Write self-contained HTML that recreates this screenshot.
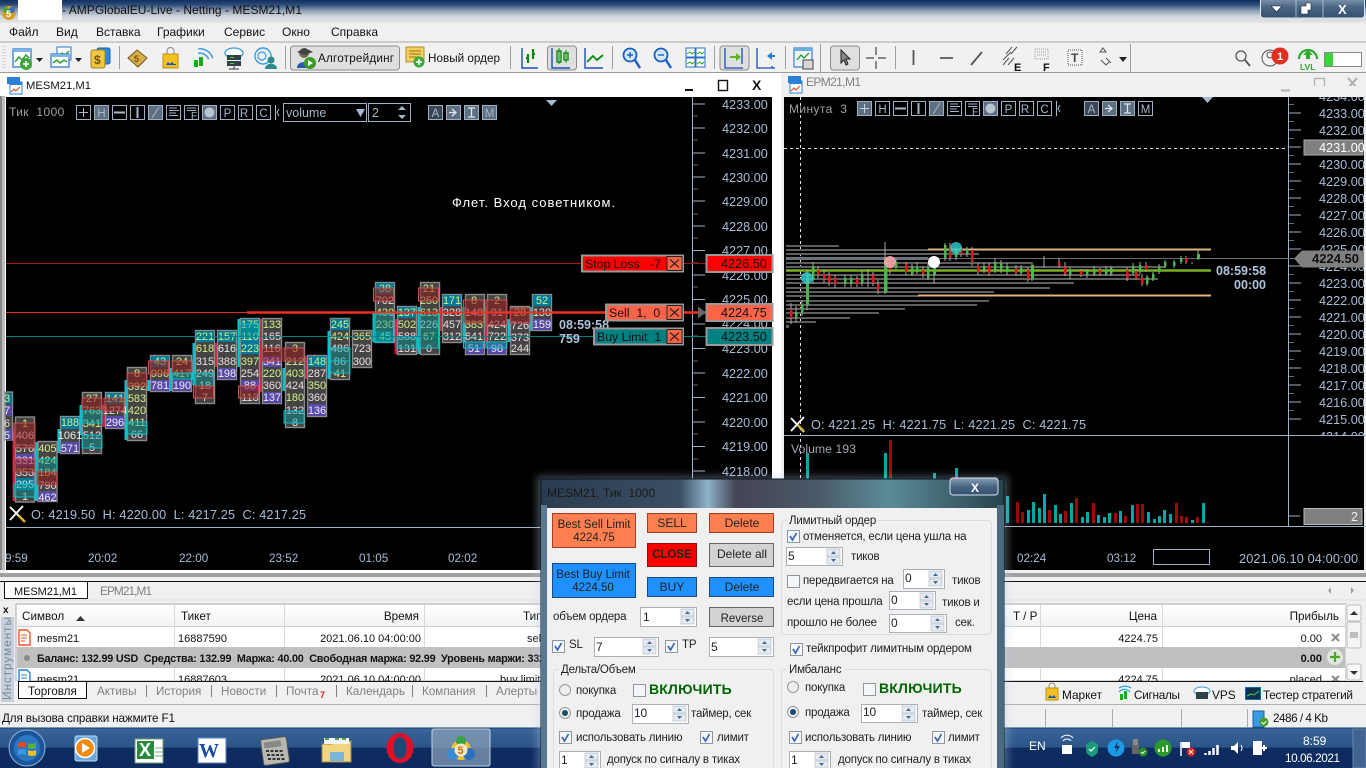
<!DOCTYPE html>
<html><head><meta charset="utf-8"><title>MT5</title>
<style>
html,body{margin:0;padding:0;width:1366px;height:768px;overflow:hidden;background:#f0f0f0}
svg{position:absolute;left:0;top:0;display:block}
text{font-family:"Liberation Sans","Noto Sans CJK JP",sans-serif;font-size:12px;white-space:pre;fill:#111}
.ax text,text.ax{font-size:12.7px;fill:#a8bcd6}
.fp text{font-size:11px;text-anchor:middle}
.g{fill:#d4f088!important}.p{fill:#f0dede!important}.w{fill:#e8f0f0!important}
.cs{fill:#444;stroke:#8a8a8a;stroke-width:1.4}
.tl{fill:#007a9a}.pu{fill:#5a48a8}
.rb{fill:rgba(150,25,25,.55);stroke:#c85050;stroke-width:1}
.tb{fill:rgba(0,150,150,.45);stroke:#00c4cc;stroke-width:1}
.cy{fill:#00c4d4}.cr{fill:#dc143c}
.bt rect{fill:none;stroke:#9fb0c4;stroke-width:1}
.bt text{fill:#a8b8cc;font-size:11.5px;text-anchor:middle}
.bt .on{fill:#5f6f82}
.d text{font-size:11.5px;fill:#222;letter-spacing:-.2px}
.d .c{text-anchor:middle;letter-spacing:0}
.sp{fill:#fff;stroke:#aab0b8}
.ar{fill:#e4eaf2;stroke:#b0b8c0;stroke-width:.6}
.ck{fill:#f4f6f8;stroke:#8e979f}
.tk{fill:none;stroke:#3a66b0;stroke-width:1.7}
.gr{fill:none;stroke:#dcdcdc}
.on2{fill:#dfdfdf;stroke:#8c8c8c;stroke-width:1}
.sep{stroke:#a0a0a0;stroke-width:1}
.tbl text{font-size:11px;fill:#111}
.tbl text.h{font-size:11.7px}
.rt{text-anchor:end}
.gt{fill:#808080!important}
.vb rect{width:3px}
</style></head><body>
<svg width="1366" height="768" viewBox="0 0 1366 768" xmlns="http://www.w3.org/2000/svg">
<defs>
<linearGradient id="tt" x1="0" y1="0" x2="0" y2="1"><stop offset="0" stop-color="#12305f"/><stop offset=".2" stop-color="#2a4a78"/><stop offset=".45" stop-color="#8c9cb0"/><stop offset=".7" stop-color="#cfd4da"/><stop offset="1" stop-color="#e6e6e6"/></linearGradient>
<linearGradient id="tbg" x1="0" y1="0" x2="0" y2="1"><stop offset="0" stop-color="#3a659a"/><stop offset=".48" stop-color="#2b5488"/><stop offset=".5" stop-color="#0f2c60"/><stop offset="1" stop-color="#0c2a5e"/></linearGradient>
<linearGradient id="gl" x1="0" y1="0" x2="1" y2="0"><stop offset="0" stop-color="#2a3c50"/><stop offset=".3" stop-color="#3b4e62"/><stop offset=".36" stop-color="#8fb4cc"/><stop offset=".42" stop-color="#445"/><stop offset=".6" stop-color="#4a5a6a"/><stop offset=".75" stop-color="#5c8c98"/><stop offset="1" stop-color="#28424e"/></linearGradient>
<linearGradient id="hd" x1="0" y1="0" x2="0" y2="1"><stop offset="0" stop-color="#fff"/><stop offset="1" stop-color="#f0f2f4"/></linearGradient>
<linearGradient id="wb" x1="0" y1="0" x2="0" y2="1"><stop offset="0" stop-color="#8aa0b8"/><stop offset=".5" stop-color="#4a6484"/><stop offset="1" stop-color="#33506e"/></linearGradient>
<filter id="bl" x="-5%" y="-5%" width="110%" height="110%"><feGaussianBlur stdDeviation="4"/></filter>
</defs>

<!-- title bar -->
<rect width="1366" height="23" fill="url(#tt)"/>
<rect x="18" y="0" width="44" height="20" fill="#fff"/>
<circle cx="9" cy="13" r="7" fill="#d8a020"/><circle cx="6" cy="10" r="3" fill="#48a048"/><circle cx="12" cy="10" r="3" fill="#3070c0"/><text x="6" y="17" style="font-size:9px;fill:#fff;font-weight:bold">5</text>
<text x="62" y="14" style="font-size:12px;fill:#101010" textLength="240">- AMPGlobalEU-Live - Netting - MESM21,M1</text>
<rect x="1260.5" y="-3" width="104" height="21" rx="3" fill="url(#wb)" stroke="#dfe6ee"/>
<path d="M1296 0v17M1323 0v17" stroke="#cfd8e2" stroke-width=".7"/>
<path d="M1271 6h11l-5.500 6z" fill="#fff" stroke="#223" stroke-width=".6"/>
<path d="M1301 6h5v-3h5v7h-3v4h-7z" fill="#fff" stroke="#223" stroke-width=".6"/>
<text x="1338" y="14" style="font-size:13px;font-weight:bold;fill:#fff">X</text>

<!-- menu -->
<rect y="23" width="1366" height="19" fill="#f0f0f0"/>
<g>
<text x="9" y="36">Файл</text><text x="56" y="36">Вид</text><text x="96" y="36">Вставка</text><text x="157" y="36">Графики</text><text x="224" y="36">Сервис</text><text x="282" y="36">Окно</text><text x="331" y="36">Справка</text>
</g>

<!-- toolbar -->
<rect y="42" width="1366" height="31" fill="#f1f1f1"/>
<path d="M0 42h1366" stroke="#a8a8a8"/><path d="M0 72.500h1366" stroke="#9a9a9a"/>
<path d="M3 46v22M5 46v22" stroke="#bbb" stroke-dasharray="1 2"/>
<path d="M119.500 46v23M285.500 46v23M510.500 46v23M612.500 46v23M714.500 46v23M785.500 46v23M895.500 46v23M1130.500 44v28M820.500 44v28" class="sep"/>
<!-- new chart -->
<rect x="13" y="49" width="18" height="18" fill="#fff" stroke="#2a70c8" stroke-width="1.2"/><rect x="13" y="49" width="18" height="3" fill="#7ab4e8"/><path d="M15 62l4-5 3 3 4-5 3 3" fill="none" stroke="#30a030" stroke-width="1.5"/>
<circle cx="26" cy="64" r="6" fill="#3ca83c"/><path d="M23 64h6M26 61v6" stroke="#fff" stroke-width="1.6"/>
<path d="M36 58h7l-3.500 4z" fill="#222"/>
<rect x="57" y="47" width="14" height="13" fill="#fff" stroke="#2a70c8"/><path d="M59 56l3-3 3 2 4-4" stroke="#30a030" fill="none" stroke-width="1.3"/>
<rect x="51" y="54" width="18" height="13" fill="#fff" stroke="#2a70c8" stroke-width="1.2"/><rect x="51" y="54" width="18" height="3" fill="#7ab4e8"/><path d="M53 63l4-3 3 3 4-3 3 2" fill="none" stroke="#30a030" stroke-width="1.5"/>
<path d="M75 58h7l-3.500 4z" fill="#222"/>
<rect x="97" y="48" width="13" height="16" rx="2" fill="#2e8ae0" stroke="#1a5aa0"/><rect x="91" y="50" width="14" height="18" rx="2" fill="#f0c840" stroke="#a08020"/><text x="94" y="64" style="font-size:12px;font-weight:bold;fill:#705010">$</text>
<!-- book -->
<path d="M128 58l9-8 10 8-9 9z" fill="#d8b048" stroke="#705a20"/><text x="134" y="62" style="font-size:9px;font-weight:bold;fill:#805010">5</text>
<!-- market bag -->
<rect x="163" y="54" width="15" height="14" fill="#f4c020" stroke="#c09010"/><path d="M167 54v-3a3 3 0 0 1 7 0v3" fill="none" stroke="#888"/><path d="M166 65l2-3 2 2 2-2 2 2 2-0v1z" fill="#1a50c0"/>
<!-- signals -->
<rect x="194" y="60" width="4" height="7" fill="#10b010"/><rect x="199" y="57" width="4" height="9" fill="#10b010"/><path d="M198 56a9 9 0 0 1 12 0M196 52a13 13 0 0 1 17 1" stroke="#3a9ae0" fill="none" stroke-width="1.5" transform="rotate(30 203 55)"/>
<!-- VPS -->
<ellipse cx="234" cy="53" rx="9" ry="5" fill="#fff" stroke="#3a9ae0" stroke-width="1.3"/><rect x="227" y="55" width="14" height="5" fill="#2f4248"/><rect x="227" y="61" width="14" height="5" fill="#2f4248"/><path d="M234 66v3M229 69h10" stroke="#333"/><path d="M230 57.500h4M230 63.500h4" stroke="#40e040"/>
<!-- community -->
<circle cx="263" cy="56" r="8" fill="none" stroke="#3a9ae0" stroke-width="1.4"/><circle cx="262" cy="56" r="4" fill="none" stroke="#3a9ae0" stroke-width="1.2"/><circle cx="271" cy="60" r="3.500" fill="#2a8a8a"/><path d="M265 69c0-7 12-7 12 0z" fill="#2a8a8a"/>
<!-- algo -->
<rect x="290.500" y="46" width="109" height="24" rx="3" class="on2"/>
<circle cx="304" cy="53" r="5" fill="#6a6a50"/><path d="M297 52l8-4 8 4-8 3z" fill="#444"/><path d="M297 68c0-8 14-8 14 0z" fill="#2a5ab0"/><circle cx="310" cy="63" r="6" fill="#3a9a2a"/><path d="M308 60l5 3-5 3z" fill="#fff"/>
<text x="318" y="62" style="font-size:11.7px;fill:#111" textLength="76">Алготрейдинг</text>
<!-- new order -->
<rect x="406" y="47" width="18" height="15" fill="#f0d060" stroke="#b09020"/><path d="M409 51h12M409 54h12M409 57h12" stroke="#a07810"/><circle cx="419" cy="62" r="5.500" fill="#3ca83c"/><path d="M416 62h6M419 59v6" stroke="#fff" stroke-width="1.5"/>
<text x="428" y="62" style="font-size:11.7px;fill:#111" textLength="72">Новый ордер</text>
<!-- chart type icons -->
<g fill="none" stroke-width="1.4">
<path d="M522 48v20h16" stroke="#1a50b8"/><path d="M528 54v9M528 58h-2M533 49v10M533 54h2" stroke="#0a8a0a" stroke-width="2.200"/>
<rect x="547.500" y="46" width="29" height="24" rx="3" class="on2" style="stroke-width:1"/>
<path d="M552 48v20h18" stroke="#1a50b8"/><rect x="557" y="51" width="4" height="11" stroke="#0a8a0a" /><rect x="564" y="53" width="4" height="7" stroke="#0a8a0a"/><path d="M559 48v16M566 50v13" stroke="#0a8a0a" stroke-width="1"/>
<path d="M585 48v20h18" stroke="#1a50b8"/><path d="M587 62l6-6 4 4 6-5" stroke="#0a8a0a" stroke-width="1.800"/>
<circle cx="630" cy="55" r="6.500" stroke="#1a60c0" stroke-width="1.800" fill="#d4e8f8"/><path d="M627 55h6M630 52v6" stroke="#1a60c0"/><path d="M635 60l5 8" stroke="#1a60c0" stroke-width="2.500"/>
<circle cx="661" cy="55" r="6.500" stroke="#1a60c0" stroke-width="1.800" fill="#d4e8f8"/><path d="M658 55h6" stroke="#1a60c0"/><path d="M666 60l5 8" stroke="#1a60c0" stroke-width="2.500"/>
</g>
<g fill="#fff" stroke="#2a70c8"><rect x="686" y="48" width="9" height="9"/><rect x="696" y="48" width="9" height="9"/><rect x="686" y="58" width="9" height="9"/><rect x="696" y="58" width="9" height="9"/></g>
<path d="M687 54l3-2 2 2 2-2M697 54l3-2 2 2 2-2M687 64l3-2 2 2 2-2M697 64l3-2 2 2 2-2" stroke="#20a020" fill="none"/>
<rect x="720" y="46" width="29" height="24" rx="3" class="on2"/>
<path d="M725 48v20h18M742 48v16" stroke="#1a50b8" fill="none" stroke-width="1.300"/><path d="M730 56h6v-3l5 4-5 4v-3h-6z" fill="#5ab02a"/>
<path d="M757 48v20h18M772 68v-2" stroke="#1a50b8" fill="none" stroke-width="1.300"/><path d="M775 55h-3v-3l-5 4 5 4v-3h3z" fill="#2a80d8"/>
<!-- save chart -->
<rect x="794" y="48" width="18" height="19" fill="#eef4fa" stroke="#2a70c8" stroke-width="1.100"/><rect x="794" y="48" width="18" height="3" fill="#6aaee0"/><path d="M797 60l4-5 3 3 5-5" stroke="#20a020" fill="none" stroke-width="1.300"/><rect x="803" y="60" width="10" height="9" fill="#d8d8d8" stroke="#444"/>
<!-- cursor btn -->
<rect x="830.500" y="46" width="29" height="24" rx="3" class="on2"/>
<path d="M841 50l0 13 3-3 2 5 2-1-2-5 4 0z" fill="#888" stroke="#222"/>
<path d="M876 47v8M876 61v8M866 58h8M878 58h8" stroke="#444" stroke-width="1.200"/>
<path d="M913.500 50v15M940 58h13M971 65l11-13" stroke="#555" stroke-width="1.800"/>
<g stroke="#555" fill="none"><path d="M1003 65l6-7M1008 65l6-7M1003 60l8-8M1006 54l6-7M1011 54l6-7M1014 50l3-3"/></g><text x="1014" y="71" style="font-size:11px;font-weight:bold">E</text>
<rect x="1035" y="49" width="13" height="10" fill="none" stroke="#999" stroke-dasharray="1 1"/><path d="M1037 52h9M1037 55h9" stroke="#999" stroke-dasharray="1 1"/><text x="1043" y="71" style="font-size:11px;font-weight:bold">F</text>
<rect x="1068" y="50" width="14" height="15" fill="none" stroke="#555" stroke-dasharray="1 1"/><text x="1071" y="62" style="font-size:12px;font-weight:bold;fill:#444">T</text>
<path d="M1100 52l3-4 3 4zM1106 58l5 5M1101 60l5 5 3-3" stroke="#555" fill="none"/>
<path d="M1119 57h8l-4 5z" fill="#222"/>
<!-- right icons -->
<circle cx="1241" cy="56" r="5" fill="none" stroke="#555" stroke-width="1.300"/><path d="M1245 60l5 6" stroke="#555" stroke-width="1.800"/>
<circle cx="1270" cy="58" r="8" fill="none" stroke="#555"/><circle cx="1270" cy="55" r="3" fill="none" stroke="#555"/>
<circle cx="1280" cy="56" r="8.500" fill="#e03020"/><text x="1277" y="60" style="font-size:11px;font-weight:bold;fill:#fff">1</text>
<path d="M1299 59a9 9 0 0 1 18 0" fill="none" stroke="#2eaa2e" stroke-width="2.200"/><path d="M1308 50l5 5h-3v4h-4v-4h-3z" fill="#2eaa2e"/>
<text x="1300" y="70" style="font-size:8.500px;font-weight:bold;fill:#2eaa2e">LVL</text>
<rect x="1324.500" y="52.500" width="37" height="14" fill="#fff" stroke="#888"/><rect x="1325" y="53" width="8" height="13" fill="#3ad43a"/>

<!-- chart window 1 -->
<rect x="0" y="73" width="781" height="505" fill="#fff"/>
<rect x="7" y="77" width="13" height="7" fill="#2a80d8"/><rect x="10" y="82" width="12" height="12" fill="#fff" stroke="#2a80d8"/><rect x="10" y="82" width="12" height="3" fill="#2a80d8"/><path d="M11 92l3-3 2 2 4-4" stroke="#e04020" fill="none"/>
<text x="26" y="89" style="font-size:11.200px;fill:#111" textLength="65">MESM21,M1</text>
<path d="M685 90h8" stroke="#111" stroke-width="2"/><rect x="718.500" y="80.500" width="9" height="10" fill="none" stroke="#111" stroke-width="1.400"/><text x="752" y="90" style="font-size:14px;font-weight:bold">X</text>
<rect x="0" y="96" width="5" height="482" fill="#bbb"/>
<rect x="0" y="96" width="2" height="482" fill="#888"/>
<rect x="6" y="97" width="766" height="473" fill="#000"/>
<path d="M6 527.500h766" stroke="#9fb0c8"/>
<path d="M692.500 97v430" stroke="#9fb0c8"/>
<!-- axis 1 -->
<g stroke="#9fb0c8" fill="none"><path d="M693 104h12M693 128h12M693 153h12M693 177h12M693 201h12M693 226h12M693 250.500h12M693 275h12M693 299.500h12M693 324h12M693 348.500h12M693 373h12M693 397.500h12M693 422h12M693 446.500h12M693 471h12M693 495h12"/><path d="M693 116h5M693 140h5M693 165h5M693 189h5M693 214h5M693 238h5M693 263h5M693 287h5M693 312h5M693 336h5M693 361h5M693 385h5M693 410h5M693 434h5M693 459h5M693 483h5" stroke="#666"/></g>
<g class="ax">
<text x="722" y="109">4233.00</text><text x="722" y="133">4232.00</text><text x="722" y="158">4231.00</text><text x="722" y="182">4230.00</text><text x="722" y="206">4229.00</text><text x="722" y="231">4228.00</text><text x="722" y="255">4227.00</text><text x="722" y="280">4226.00</text><text x="722" y="304">4225.00</text><text x="722" y="328">4224.00</text><text x="722" y="353">4223.00</text><text x="722" y="378">4222.00</text><text x="722" y="402">4221.00</text><text x="722" y="427">4220.00</text><text x="722" y="451">4219.00</text><text x="722" y="476">4218.00</text>
</g>
<!-- chart1 toolbar -->
<text x="9" y="116" style="font-size:12px;fill:#a0a0a0;letter-spacing:.4px">Тик  1000</text>
<g class="bt">
<rect x="76.500" y="105.500" width="14" height="14"/><path d="M79 112.500h9M83.500 108v9" stroke="#a8b8cc"/>
<rect x="94.500" y="105.500" width="14" height="14" class="on"/><text x="101.500" y="117">H</text>
<rect x="112.500" y="105.500" width="14" height="14"/><path d="M114 112.500h11" stroke="#a8b8cc" stroke-width="2"/>
<rect x="130.500" y="105.500" width="14" height="14"/><path d="M137.500 107v11" stroke="#a8b8cc" stroke-width="2"/>
<rect x="148.500" y="105.500" width="14" height="14" class="on"/><path d="M152 118l7-11" stroke="#a8b8cc"/>
<rect x="166.500" y="105.500" width="14" height="14"/><path d="M169 108h8M169 110.500h10M169 113h7M169 115.500h9" stroke="#a8b8cc"/>
<rect x="184.500" y="105.500" width="14" height="14"/><path d="M187 108h9M187 110.500h9" stroke="#a8b8cc"/><text x="194" y="119" style="font-size:10px">F</text>
<rect x="202.500" y="105.500" width="14" height="14" class="on"/><circle cx="209.500" cy="112.500" r="5" fill="#b8c4d0"/>
<rect x="220.500" y="105.500" width="14" height="14"/><text x="227.500" y="117">P</text>
<rect x="238.500" y="105.500" width="14" height="14"/><text x="244" y="117">R</text>
<rect x="256.500" y="105.500" width="14" height="14"/><text x="263.500" y="117">C</text>
<path d="M275.500 105v15M279 109l-2 3.500 2 3.500" stroke="#a8b8cc" fill="none"/>
<rect x="283.500" y="103.500" width="83" height="18"/><text x="286" y="117" style="text-anchor:start;font-size:12.5px">volume</text><path d="M356 109h9l-4.500 8z" fill="#a8b8cc"/>
<rect x="368.500" y="103.500" width="42" height="18"/><text x="372" y="117" style="text-anchor:start;font-size:12.5px">2</text><path d="M398 110l4-4 4 4zM398 115l4 4 4-4z" fill="#a8b8cc"/>
<rect x="428.500" y="105.500" width="14" height="14" class="on" style="fill:#3a4656"/><text x="435.500" y="117">A</text>
<rect x="446.500" y="105.500" width="14" height="14" class="on"/><path d="M449 112.500h6M452 109l4 3.500-4 3.500" stroke="#e0e6ee" fill="none" stroke-width="1.300"/>
<rect x="464.500" y="105.500" width="14" height="14" class="on"/><path d="M468 108h7M468 117h7M471.500 108v9" stroke="#e0e6ee" stroke-width="1.300"/>
<rect x="482.500" y="105.500" width="14" height="14" class="on"/><text x="489.500" y="117">M</text>
</g>
<path d="M546 100h11l-5.500 6z" fill="#a8b8cc"/>
<text x="452" y="207" style="font-size:13px;fill:#fff" textLength="163">Флет. Вход советником.</text>
<!-- price lines -->
<path d="M6 263.500h700" stroke="#a01818"/>
<path d="M6 312.500h241" stroke="#e03020"/>
<path d="M247 312.500h459" stroke="#f03020" stroke-width="2.500"/>
<path d="M6 336.500h700" stroke="#008080"/>

<!-- footprint -->
<g class="fp">
<!-- strips -->
<rect class="cr" x="12.500" y="430" width="3" height="71"/><rect class="cy" x="35" y="442" width="3" height="59"/><rect class="cy" x="57.500" y="429" width="3" height="24"/><rect class="cy" x="79.500" y="405" width="3" height="30"/><rect class="cr" x="102.500" y="405" width="3" height="22"/><rect class="cy" x="124.500" y="380" width="3" height="60"/><rect class="cy" x="147" y="380" width="3" height="11"/><rect class="cy" x="169.500" y="368" width="3" height="23"/><rect class="cy" x="192.500" y="343" width="3" height="42"/><rect class="cr" x="214.500" y="343" width="3" height="24"/><rect class="cy" x="237.500" y="319" width="3" height="48"/><rect class="cr" x="259.500" y="319" width="3" height="73"/><rect class="cy" x="282.500" y="368" width="3" height="23"/><rect class="cr" x="304.500" y="356" width="3" height="23"/><rect class="cy" x="327.500" y="331" width="3" height="48"/><rect class="cy" x="372.500" y="313" width="3" height="29"/><rect class="cr" x="394.500" y="319" width="3" height="35"/><rect class="cy" x="417.500" y="307" width="3" height="47"/><rect class="cr" x="439.500" y="307" width="3" height="24"/><rect class="cy" x="462.500" y="307" width="3" height="35"/><rect class="cr" x="484.500" y="307" width="3" height="35"/><rect class="cy" x="507.500" y="319" width="3" height="23"/><rect class="cy" x="529.500" y="307" width="3" height="24"/>
<!-- c0 -->
<rect class="cs" x="5" y="392" width="7.500" height="48"/><rect class="tl" x="6" y="393" width="6" height="11"/><rect class="pu" x="6" y="405" width="6" height="11"/><rect class="pu" x="6" y="429" width="6" height="11"/>
<text x="7" y="402" class="g">3</text><text x="7" y="414" class="w">7</text><text x="7" y="427" class="p">6</text><text x="7" y="439" class="w">5</text>
<!-- c1 -->
<rect class="cs" x="15.500" y="417" width="19" height="85"/><rect class="pu" x="16" y="454" width="18" height="12"/><rect class="tl" x="16" y="478" width="18" height="12"/>
<text x="25" y="427" class="g">1</text><text x="25" y="439" class="p">406</text><text x="25" y="452" class="p">576</text><text x="25" y="464" class="p">331</text><text x="25" y="476" class="p">353</text><text x="25" y="488" class="p">295</text><text x="25" y="500" class="p">1</text>
<rect class="rb" x="14" y="423" width="21" height="25"/><rect class="rb" x="14" y="459" width="21" height="13"/><rect class="tb" x="14" y="484" width="21" height="13"/>
<!-- c2 -->
<rect class="cs" x="38" y="441.500" width="19" height="60"/><rect class="pu" x="38.500" y="491" width="18" height="10"/>
<text x="47.500" y="452" class="g">405</text><text x="47.500" y="464" class="g">424</text><text x="47.500" y="476" class="g">184</text><text x="47.500" y="489" class="p">790</text><text x="47.500" y="501" class="w">462</text>
<rect class="tb" x="37" y="459" width="20" height="13"/><rect class="rb" x="37" y="472" width="20" height="13"/>
<!-- c3 -->
<rect class="cs" x="60.500" y="416.500" width="19" height="37"/><rect class="tl" x="61" y="417" width="18" height="12"/><rect class="pu" x="61" y="442" width="18" height="11"/>
<text x="70" y="426" class="g">188</text><text x="70" y="439" class="w">1061</text><text x="70" y="452" class="w">571</text>
<!-- c4 -->
<rect class="cs" x="82.500" y="392.500" width="19" height="61"/>
<text x="92" y="402" class="g">27</text><text x="92" y="414" class="g">763</text><text x="92" y="427" class="g">341</text><text x="92" y="439" class="p">512</text><text x="92" y="451" class="p">5</text>
<rect class="rb" x="82" y="398" width="20" height="13"/><rect class="tb" x="82" y="411" width="20" height="12"/><rect class="tb" x="82" y="435" width="20" height="13"/>
<!-- c5 -->
<rect class="cs" x="105.500" y="392.500" width="19" height="36"/><rect class="tl" x="106" y="393" width="18" height="11"/><rect class="pu" x="106" y="416" width="18" height="12"/>
<text x="115" y="402" class="g">141</text><text x="115" y="414" class="p">1274</text><text x="115" y="426" class="w">296</text>
<rect class="rb" x="104" y="398" width="20" height="13"/>
<!-- c6 -->
<rect class="cs" x="127.500" y="367.500" width="19" height="73"/>
<text x="137" y="377" class="g">8</text><text x="137" y="390" class="g">392</text><text x="137" y="402" class="g">583</text><text x="137" y="414" class="g">420</text><text x="137" y="426" class="g">411</text><text x="137" y="438" class="p">66</text>
<rect class="rb" x="127" y="373" width="20" height="13"/><rect class="tb" x="127" y="422" width="20" height="12"/>
<!-- c7 -->
<rect class="cs" x="150.500" y="355.500" width="19" height="36"/><rect class="tl" x="151" y="356" width="18" height="11"/><rect class="pu" x="151" y="380" width="18" height="11"/>
<text x="160" y="365" class="g">43</text><text x="160" y="377" class="g">996</text><text x="160" y="389" class="w">781</text>
<rect class="rb" x="148.500" y="361" width="20" height="13"/>
<!-- c8 -->
<rect class="cs" x="172.500" y="355.500" width="19" height="36"/><rect class="pu" x="173" y="380" width="18" height="11"/>
<text x="182" y="365" class="g">24</text><text x="182" y="377" class="g">417</text><text x="182" y="389" class="w">190</text>
<rect class="rb" x="172" y="361" width="20" height="13"/><rect class="tb" x="172" y="373" width="20" height="6"/>
<!-- c9 -->
<rect class="cs" x="195.500" y="330.500" width="19" height="73"/><rect class="tl" x="196" y="331" width="18" height="11"/>
<text x="205" y="340" class="g">221</text><text x="205" y="352" class="g">618</text><text x="205" y="365" class="p">315</text><text x="205" y="377" class="p">249</text><text x="205" y="389" class="p">18</text><text x="205" y="401" class="p">7</text>
<rect class="tb" x="193.500" y="373" width="20" height="13"/><rect class="rb" x="193.500" y="386" width="20" height="12"/>
<!-- c10 -->
<rect class="cs" x="217.500" y="330.500" width="19" height="49"/><rect class="tl" x="218" y="331" width="18" height="11"/><rect class="pu" x="218" y="368" width="18" height="11"/>
<text x="227" y="340" class="g">157</text><text x="227" y="352" class="w">616</text><text x="227" y="365" class="p">388</text><text x="227" y="377" class="w">198</text>
<!-- c11 -->
<rect class="cs" x="240.500" y="318.500" width="19" height="85"/><rect class="tl" x="241" y="319" width="18" height="24"/><rect class="tl" x="241" y="343" width="18" height="11"/><rect class="pu" x="241" y="380" width="18" height="11"/>
<text x="250" y="328" class="g">175</text><text x="250" y="340" class="g">110</text><text x="250" y="352" class="g">223</text><text x="250" y="365" class="g">397</text><text x="250" y="377" class="p">254</text><text x="250" y="389" class="p">88</text><text x="250" y="401" class="p">113</text>
<rect class="tb" x="238.500" y="324" width="20" height="13"/><rect class="rb" x="238.500" y="386" width="20" height="12"/>
<!-- c12 -->
<rect class="cs" x="262.500" y="318.500" width="19" height="85"/><rect class="pu" x="263" y="356" width="18" height="11"/><rect class="pu" x="263" y="392" width="18" height="11"/>
<text x="272" y="328" class="g">133</text><text x="272" y="340" class="p">165</text><text x="272" y="352" class="p">116</text><text x="272" y="365" class="p">341</text><text x="272" y="377" class="g">220</text><text x="272" y="389" class="p">360</text><text x="272" y="401" class="w">137</text>
<rect class="rb" x="262" y="348" width="20" height="13"/>
<!-- c13 -->
<rect class="cs" x="285.500" y="342.500" width="19" height="85"/>
<text x="295" y="352" class="g">3</text><text x="295" y="365" class="g">212</text><text x="295" y="377" class="g">403</text><text x="295" y="389" class="p">424</text><text x="295" y="401" class="g">180</text><text x="295" y="414" class="p">132</text><text x="295" y="426" class="p">8</text>
<rect class="rb" x="284" y="348" width="20" height="13"/><rect class="tb" x="284" y="411" width="20" height="12"/>
<!-- c14 -->
<rect class="cs" x="307.500" y="355.500" width="19" height="61"/><rect class="tl" x="308" y="356" width="18" height="11"/><rect class="pu" x="308" y="404" width="18" height="12"/>
<text x="317" y="365" class="g">148</text><text x="317" y="377" class="p">287</text><text x="317" y="389" class="g">350</text><text x="317" y="401" class="p">360</text><text x="317" y="414" class="w">136</text>
<!-- c15 -->
<rect class="cs" x="330.500" y="318.500" width="19" height="61"/><rect class="tl" x="331" y="319" width="18" height="11"/>
<text x="340" y="328" class="g">245</text><text x="340" y="340" class="g">424</text><text x="340" y="352" class="p">486</text><text x="340" y="365" class="p">86</text><text x="340" y="377" class="g">41</text>
<rect class="tb" x="330" y="348" width="20" height="13"/><rect class="tb" x="330" y="361" width="20" height="12"/>
<!-- c16 -->
<rect class="cs" x="352.500" y="330.500" width="19" height="37"/>
<text x="362" y="340" class="g">365</text><text x="362" y="352" class="p">723</text><text x="362" y="365" class="p">300</text>
<!-- c17 -->
<rect class="cs" x="375.500" y="282.500" width="19" height="60"/><rect class="tl" x="376" y="283" width="18" height="11"/><rect class="tl" x="376" y="331" width="18" height="11"/>
<text x="385" y="292" class="g">38</text><text x="385" y="304" class="p">702</text><text x="385" y="316" class="g">430</text><text x="385" y="328" class="g">230</text><text x="385" y="340" class="g">45</text>
<rect class="rb" x="373.500" y="288" width="20" height="13"/><rect class="tb" x="373.500" y="314" width="20" height="28"/>
<!-- c18 -->
<rect class="cs" x="397.500" y="306.500" width="19" height="48"/><rect class="tl" x="398" y="307" width="18" height="11"/>
<text x="407" y="316" class="g">137</text><text x="407" y="328" class="g">502</text><text x="407" y="340" class="p">588</text><text x="407" y="352" class="p">131</text>
<rect class="tb" x="397" y="337" width="20" height="11"/>
<!-- c19 -->
<rect class="cs" x="420.500" y="282.500" width="19" height="72"/>
<text x="429" y="292" class="g">21</text><text x="429" y="304" class="g">250</text><text x="429" y="316" class="g">613</text><text x="429" y="328" class="p">226</text><text x="429" y="340" class="g">67</text><text x="429" y="352" class="p">0</text>
<rect class="rb" x="418.500" y="288" width="20" height="13"/><rect class="tb" x="418.500" y="312" width="20" height="36"/>
<!-- c20 -->
<rect class="cs" x="442.500" y="294.500" width="19" height="48"/><rect class="tl" x="443" y="295" width="18" height="11"/>
<text x="452" y="304" class="g">171</text><text x="452" y="316" class="p">328</text><text x="452" y="328" class="p">457</text><text x="452" y="340" class="p">312</text>
<!-- c21 -->
<rect class="cs" x="465.500" y="294.500" width="19" height="60"/><rect class="pu" x="466" y="343" width="18" height="11"/>
<text x="474" y="304" class="g">8</text><text x="474" y="316" class="p">148</text><text x="474" y="328" class="g">383</text><text x="474" y="340" class="p">641</text><text x="474" y="352" class="w">51</text>
<rect class="rb" x="463.500" y="300" width="20" height="23"/><rect class="tb" x="463.500" y="342" width="20" height="6"/>
<!-- c22 -->
<rect class="cs" x="487.500" y="294.500" width="19" height="60"/><rect class="pu" x="488" y="343" width="18" height="11"/>
<text x="497" y="304" class="g">2</text><text x="497" y="316" class="p">91</text><text x="497" y="328" class="p">424</text><text x="497" y="340" class="p">722</text><text x="497" y="352" class="w">98</text>
<rect class="rb" x="486" y="300" width="21" height="25"/><rect class="tb" x="486" y="342" width="21" height="6"/>
<!-- c23 -->
<rect class="cs" x="510.500" y="306.500" width="19" height="48"/>
<text x="520" y="316" class="g">28</text><text x="520" y="329" class="p">726</text><text x="520" y="341" class="p">373</text><text x="520" y="352" class="p">244</text>
<rect class="rb" x="510" y="308" width="20" height="15"/>
<!-- c24 -->
<rect class="cs" x="532.500" y="294.500" width="19" height="36"/><rect class="tl" x="533" y="295" width="18" height="11"/><rect class="pu" x="533" y="319" width="18" height="11"/>
<text x="542" y="304" class="g">52</text><text x="542" y="316" class="p">130</text><text x="542" y="328" class="w">159</text>
</g>
<path d="M6 312.500h241" stroke="#e03020" opacity=".8"/>
<path d="M247 312.500h359" stroke="#f03020" stroke-width="2"/>
<path d="M6 336.500h590" stroke="#008080" opacity=".8"/>
<text x="559" y="329" style="font-size:12.5px;font-weight:bold;fill:#b0c4de">08:59:58</text>
<text x="559" y="343" style="font-size:12.5px;font-weight:bold;fill:#b0c4de">759</text>

<!-- order labels -->
<rect x="582" y="255.500" width="101" height="16" fill="#f00" stroke="#999" stroke-width="2"/><text x="585" y="268" style="font-size:12.3px">Stop Loss   -7</text><rect x="667" y="256.500" width="15" height="14" fill="#ff6347" stroke="#222"/><path d="M670 259.500l9 8M679 259.500l-9 8" stroke="#111"/>
<rect x="706.500" y="255" width="66" height="17" fill="#f00" stroke="#999" stroke-width="2"/><text x="721" y="268" style="font-size:12.7px">4226.50</text>
<rect x="606" y="304.500" width="77" height="16" fill="#ff6347" stroke="#999" stroke-width="2"/><text x="609" y="317" style="font-size:12.3px">Sell  1,  0</text><rect x="667" y="305.500" width="15" height="14" fill="#ff6347" stroke="#222"/><path d="M670 308.500l9 8M679 308.500l-9 8" stroke="#111"/>
<rect x="706.500" y="304" width="66" height="17" fill="#ff6347" stroke="#999" stroke-width="2"/><text x="721" y="317" style="font-size:12.7px">4224.75</text>
<path d="M706 312.500l-8-6v12z" fill="#666"/>
<rect x="594" y="328.500" width="89" height="16" fill="#008080" stroke="#999" stroke-width="2"/><text x="597" y="341" style="font-size:12.3px">Buy Limit  1</text><rect x="667" y="329.500" width="15" height="14" fill="#ff6347" stroke="#222"/><path d="M670 332.500l9 8M679 332.500l-9 8" stroke="#111"/>
<rect x="706.500" y="328" width="66" height="17" fill="#008080" stroke="#999" stroke-width="2"/><text x="721" y="341" style="font-size:12.7px">4223.50</text>

<!-- ohlc 1 -->
<path d="M10 507l14 14M23 506l-13 14" stroke="#f0f0f0" stroke-width="2"/><path d="M19 516l6 6" stroke="#e0b020" stroke-width="2.500"/>
<text x="31" y="519" class="ax" textLength="275">O: 4219.50  H: 4220.00  L: 4217.25  C: 4217.25</text>
<!-- time axis 1 -->
<g class="ax"><text x="5" y="562" style="font-size:11.700px">9:59</text><text x="88" y="562" style="font-size:11.700px">20:02</text><text x="179" y="562" style="font-size:11.700px">22:00</text><text x="269" y="562" style="font-size:11.700px">23:52</text><text x="359" y="562" style="font-size:11.700px">01:05</text><text x="448" y="562" style="font-size:11.700px">02:02</text></g>

<!-- chart window 2 -->
<rect x="781" y="73" width="585" height="505" fill="#f0f0f0"/>
<rect x="788" y="76" width="13" height="7" fill="#2a80d8"/><rect x="790" y="81" width="12" height="12" fill="#fff" stroke="#2a80d8"/><rect x="790" y="81" width="12" height="3" fill="#2a80d8"/><path d="M791 91l3-3 2 2 4-4" stroke="#e04020" fill="none"/>
<text x="806" y="86" style="font-size:12px;fill:#808080" textLength="55">EPM21,M1</text>
<path d="M1281 90.500h9" stroke="#b0b0b0" stroke-width="2"/><rect x="1314.500" y="78.500" width="10" height="10" fill="none" stroke="#b0b0b0" stroke-width="1.300"/><path d="M1348 78l9 10M1357 78l-9 10" stroke="#aaa" stroke-width="1.800"/>
<rect x="784" y="97" width="582" height="473" fill="#000"/>
<rect x="1364" y="96" width="2" height="474" fill="#eee"/>
<path d="M1288.500 97v429" stroke="#9fb0c8"/>
<path d="M784 148.500h504" stroke="#dde" stroke-dasharray="3 3"/>
<path d="M800.500 97v430" stroke="#dde" stroke-dasharray="3 3"/>
<g stroke="#9fb0c8"><path d="M1289 113h12M1289 130h12M1289 147h12M1289 164h12M1289 181h12M1289 198h12M1289 215h12M1289 232h12M1289 249h12M1289 266h12M1289 283h12M1289 300h12M1289 317h12M1289 334h12M1289 351h12M1289 368h12M1289 385h12M1289 402h12M1289 419h12M1289 516h11"/><path d="M1289 104.500h5M1289 121.500h5M1289 138.500h5M1289 155.500h5M1289 172.500h5M1289 189.500h5M1289 206.500h5M1289 223.500h5M1289 240.500h5M1289 274.500h5M1289 291.500h5M1289 308.500h5M1289 325.500h5M1289 342.500h5M1289 359.500h5M1289 376.500h5M1289 393.500h5M1289 410.500h5" stroke="#667"/></g>
<g class="ax">
<text x="1319" y="101">4234.00</text><text x="1319" y="118">4233.00</text><text x="1319" y="135">4232.00</text><text x="1319" y="169">4230.00</text><text x="1319" y="186">4229.00</text><text x="1319" y="203">4228.00</text><text x="1319" y="220">4227.00</text><text x="1319" y="237">4226.00</text><text x="1319" y="254">4225.00</text><text x="1319" y="271">4224.00</text><text x="1319" y="288">4223.00</text><text x="1319" y="305">4222.00</text><text x="1319" y="322">4221.00</text><text x="1319" y="339">4220.00</text><text x="1319" y="356">4219.00</text><text x="1319" y="373">4218.00</text><text x="1319" y="390">4217.00</text><text x="1319" y="407">4216.00</text><text x="1319" y="424">4215.00</text><text x="1319" y="441">4214.00</text>
</g>
<rect x="1300" y="86" width="66" height="11" fill="#f0f0f0"/>
<rect x="1300" y="435" width="64" height="10" fill="#000"/>
<path d="M784 435.500h582M784 526.500h582" stroke="#9fb0c8"/>
<path d="M1288.500 435v91" stroke="#9fb0c8"/>
<rect x="1304" y="140" width="59" height="15" fill="#808080" stroke="#aaa"/><text x="1319" y="152" style="font-size:12.700px;fill:#fff">4231.00</text>
<!-- chart 2 toolbar -->
<text x="789" y="113" style="font-size:12px;fill:#a0a0a0;letter-spacing:.4px">Минута  3</text>
<g class="bt">
<rect x="857.500" y="101.500" width="14" height="14" class="on"/><path d="M860 108.500h9M864.500 104v9" stroke="#c8d4e0"/>
<rect x="875.500" y="101.500" width="14" height="14"/><text x="882.500" y="113">H</text>
<rect x="893.500" y="101.500" width="14" height="14"/><path d="M895 108.500h11" stroke="#a8b8cc" stroke-width="2"/>
<rect x="911.500" y="101.500" width="14" height="14"/><path d="M918.500 103v11" stroke="#a8b8cc" stroke-width="2"/>
<rect x="929.500" y="101.500" width="14" height="14" class="on"/><path d="M933 114l7-11" stroke="#a8b8cc"/>
<rect x="947.500" y="101.500" width="14" height="14"/><path d="M950 104h8M950 106.500h10M950 109h7M950 111.500h9" stroke="#a8b8cc"/>
<rect x="965.500" y="101.500" width="14" height="14"/><path d="M968 104h9M968 106.500h9" stroke="#a8b8cc"/><text x="975" y="115" style="font-size:10px">F</text>
<rect x="983.500" y="101.500" width="14" height="14" class="on"/><circle cx="990.500" cy="108.500" r="5" fill="#b8c4d0"/>
<rect x="1001.500" y="101.500" width="14" height="14"/><text x="1008.500" y="113">P</text>
<rect x="1019.500" y="101.500" width="14" height="14"/><text x="1025" y="113">R</text>
<rect x="1037.500" y="101.500" width="14" height="14"/><text x="1044.500" y="113">C</text>
<path d="M1056.500 101v15M1060 105l-2 3.500 2 3.500" stroke="#a8b8cc" fill="none"/>
<rect x="1084.500" y="101.500" width="14" height="14" class="on" style="fill:#3a4656"/><text x="1091.500" y="113">A</text>
<rect x="1102.500" y="101.500" width="14" height="14" class="on"/><path d="M1105 108.500h6M1108 105l4 3.500-4 3.500" stroke="#e0e6ee" fill="none" stroke-width="1.300"/>
<rect x="1120.500" y="101.500" width="14" height="14" class="on"/><path d="M1124 104h7M1124 113h7M1127.500 104v9" stroke="#e0e6ee" stroke-width="1.300"/>
<rect x="1138.500" y="101.500" width="14" height="14"/><text x="1145.500" y="113">M</text>
</g>
<path d="M1202 97h11l-5.500 6z" fill="#a8b8cc"/>
<!-- volume profile -->
<g fill="#5e5e5e">
<rect x="786" y="245" width="53" height="2"/><rect x="786" y="249" width="142" height="2"/><rect x="786" y="253" width="193" height="2"/><rect x="786" y="257" width="142" height="3" fill="#70787e"/><rect x="786" y="262" width="245" height="2"/><rect x="786" y="266" width="380" height="2"/><rect x="786" y="274" width="354" height="2"/><rect x="786" y="278" width="372" height="2"/><rect x="786" y="282" width="288" height="2"/><rect x="786" y="287" width="264" height="2"/><rect x="786" y="291" width="208" height="2"/><rect x="786" y="295" width="133" height="2"/><rect x="786" y="300" width="203" height="2"/><rect x="786" y="304" width="191" height="2"/><rect x="786" y="308" width="119" height="2"/><rect x="786" y="312" width="93" height="2"/><rect x="786" y="317" width="64" height="2"/><rect x="786" y="321" width="30" height="2"/><rect x="786" y="325" width="3" height="3"/>
</g>
<path d="M928 249.500h283M918 295.500h293" stroke="#e0b47c" stroke-width="2"/>
<path d="M786 270.500h425" stroke="#78b020" stroke-width="2.500"/>
<path d="M787 258.500h507" stroke="#606c78"/>
<!-- wicks -->
<path d="M791 303v21M796 306v16M802 300v16M807 270v40M813 262v22M818 266v12M824 270v13M829 272v14M835 275v13M845 275v12M851 275v12M857 276v11M862 270v16M868 269v18M873 272v14M878 280v14M885 242v52M890 258v16M896 260v9M906 262v13M912 264v12M917 262v12M923 266v12M928 264v16M934 260v24M945 243v18M950 243v18M956 247v13M961 247v10M967 247v10M972 247v19M978 263v12M984 263v10M989 263v13M995 258v15M1001 260v13M1007 263v12M1016 265v11M1021 265v11M1028 267v15M1032 262v19M1044 256v12M1059 258v10M1065 262v14M1070 267v12M1081 269v8M1087 269v9M1094 266v10M1100 268v8M1106 266v10M1111 266v10M1127 267v14M1133 263v12M1140 262v12M1146 262v10M1136 269v11M1142 274v12M1147 275v11M1153 272v9M1159 264v10M1165 260v8M1174 260v8M1181 256v8M1186 256v8M1192 262v2M1198 249v11" stroke="#aaa"/>
<!-- candle bodies -->
<g fill="#e01818">
<rect x="790" y="309" width="2.500" height="9"/><rect x="817" y="270" width="2.500" height="5"/><rect x="823" y="274" width="2.500" height="5"/><rect x="828" y="275" width="2.500" height="8"/><rect x="834" y="278" width="2.500" height="6"/><rect x="856" y="279" width="2.500" height="5"/><rect x="872" y="275" width="2.500" height="8"/><rect x="877" y="284" width="2.500" height="6"/><rect x="889" y="262" width="2.500" height="8"/><rect x="905" y="264" width="2.500" height="8"/><rect x="922" y="270" width="2.500" height="4"/><rect x="949" y="245" width="2.500" height="13"/><rect x="960" y="249" width="2.500" height="5"/><rect x="971" y="250" width="2.500" height="13"/><rect x="977" y="266" width="2.500" height="6"/><rect x="988" y="266" width="2.500" height="7"/><rect x="1015" y="268" width="2.500" height="5"/><rect x="1027" y="270" width="2.500" height="9"/><rect x="1058" y="262" width="2.500" height="4"/><rect x="1064" y="267" width="2.500" height="7"/><rect x="1080" y="271" width="2.500" height="4"/><rect x="1099" y="270" width="2.500" height="3"/><rect x="1126" y="270" width="2.500" height="8"/><rect x="1135" y="271" width="2.500" height="8"/><rect x="1141" y="278" width="2.500" height="6"/><rect x="1145" y="265" width="2.500" height="5"/><rect x="1185" y="258" width="2.500" height="4"/>
</g>
<g fill="#48b848">
<rect x="795" y="312" width="2.500" height="5"/><rect x="801" y="305" width="2.500" height="7"/><rect x="806" y="275" width="3" height="30"/><rect x="812" y="266" width="2.500" height="14"/><rect x="844" y="278" width="2.500" height="6"/><rect x="850" y="278" width="2.500" height="6"/><rect x="861" y="274" width="2.500" height="9"/><rect x="884" y="258" width="3.500" height="34"/><rect x="895" y="262" width="2.500" height="5"/><rect x="911" y="267" width="2.500" height="7"/><rect x="916" y="267" width="2.500" height="5"/><rect x="927" y="268" width="2.500" height="10"/><rect x="933" y="262" width="3" height="13"/><rect x="944" y="245" width="2.500" height="13"/><rect x="955" y="250" width="2.500" height="7"/><rect x="966" y="249" width="2.500" height="5"/><rect x="983" y="266" width="2.500" height="4"/><rect x="994" y="262" width="2.500" height="8"/><rect x="1000" y="264" width="2.500" height="6"/><rect x="1006" y="266" width="2.500" height="6"/><rect x="1020" y="268" width="2.500" height="5"/><rect x="1031" y="265" width="3" height="14"/><rect x="1069" y="270" width="2.500" height="5"/><rect x="1086" y="271" width="2.500" height="4"/><rect x="1093" y="269" width="2.500" height="5"/><rect x="1105" y="269" width="2.500" height="5"/><rect x="1110" y="268" width="2.500" height="6"/><rect x="1132" y="266" width="2.500" height="7"/><rect x="1139" y="265" width="2.500" height="7"/><rect x="1146" y="277" width="2.500" height="7"/><rect x="1152" y="274" width="2.500" height="5"/><rect x="1158" y="266" width="2.500" height="6"/><rect x="1164" y="262" width="2.500" height="4"/><rect x="1173" y="262" width="2.500" height="4"/><rect x="1180" y="258" width="2.500" height="4"/><rect x="1197" y="254" width="3" height="5"/>
</g>
<circle cx="807" cy="278" r="6" fill="#30d0d0" opacity=".8"/><circle cx="890" cy="262" r="6" fill="#f4a8a8" opacity=".9"/><circle cx="934" cy="262" r="6" fill="#fff"/><circle cx="956" cy="248" r="6" fill="#30d0d0" opacity=".8"/>
<text x="1216" y="275" style="font-size:12.500px;font-weight:bold;fill:#b0c4de">08:59:58</text>
<text x="1266" y="289" style="font-size:12.500px;font-weight:bold;fill:#b0c4de;text-anchor:end">00:00</text>
<path d="M1294 258.500l8-8h62v17h-62z" fill="#808080"/><text x="1312" y="263" style="font-size:13px;font-weight:bold;fill:#111">4224.50</text>
<!-- ohlc 2 -->
<path d="M791 418l13 14M804 417l-13 14" stroke="#f0f0f0" stroke-width="2"/><path d="M798 425l6 6" stroke="#e0b020" stroke-width="2"/>
<text x="811" y="429" class="ax" textLength="275">O: 4221.25  H: 4221.75  L: 4221.25  C: 4221.75</text>
<!-- volume panel -->
<text x="791" y="453" style="font-size:12.300px;fill:#a0a8b0">Volume 193</text>
<g class="vb" fill="#00a8a8">
<rect x="806" y="453" height="70"/><rect x="884" y="453" height="70"/><rect x="933" y="473" height="50"/><rect x="955" y="468" height="55"/>
<rect x="1006" y="496" height="27"/><rect x="1027" y="510" height="13"/><rect x="1032" y="502" height="21"/><rect x="1038" y="508" height="15"/><rect x="1043" y="494" height="29"/><rect x="1054" y="505" height="18"/><rect x="1059" y="514" height="9"/><rect x="1070" y="503" height="20"/><rect x="1081" y="517" height="6"/><rect x="1086" y="512" height="11"/><rect x="1097" y="515" height="8"/><rect x="1103" y="517" height="6"/><rect x="1108" y="513" height="10"/><rect x="1119" y="511" height="12"/><rect x="1131" y="505" height="18"/><rect x="1147" y="512" height="11"/><rect x="1153" y="519" height="4"/><rect x="1158" y="516" height="7"/><rect x="1163" y="510" height="13"/><rect x="1169" y="514" height="9"/><rect x="1191" y="520" height="3"/><rect x="1202" y="503" height="20"/>
</g>
<g class="vb" fill="#a00808">
<rect x="889" y="440" height="83"/><rect x="1016" y="502" height="21"/><rect x="1021" y="512" height="11"/><rect x="1048" y="510" height="13"/><rect x="1064" y="511" height="12"/><rect x="1075" y="498" height="25"/><rect x="1092" y="503" height="20"/><rect x="1114" y="513" height="10"/><rect x="1124" y="516" height="7"/><rect x="1136" y="504" height="19"/><rect x="1141" y="504" height="19"/><rect x="1175" y="503" height="20"/><rect x="1180" y="516" height="7"/><rect x="1185" y="517" height="6"/><rect x="1196" y="517" height="6"/><rect x="1206" y="522" height="1"/>
</g>
<rect x="1304" y="508.500" width="58" height="16" fill="#808080" stroke="#bbb"/><text x="1351" y="521" style="font-size:12.500px;fill:#eee">2</text>
<!-- time axis 2 -->
<g class="ax"><text x="1017" y="562" style="font-size:11.700px">02:24</text><text x="1107" y="562" style="font-size:11.700px">03:12</text><text x="1239" y="563" style="font-size:12.700px" textLength="119">2021.06.10 04:00:00</text></g>
<rect x="1153.500" y="549.500" width="56" height="15" fill="none" stroke="#9fb0c8"/>

<!-- lower pane -->
<rect y="570" width="1366" height="3" fill="#f0f0f0"/>
<rect x="6" y="570" width="766" height="3" fill="#fff"/>
<rect y="573" width="1366" height="4" fill="#a0a0a0"/>
<rect y="577" width="1366" height="26" fill="#f0f0f0"/>
<path d="M0 581.500h1366" stroke="#111"/>
<rect x="4.500" y="581.500" width="83" height="17" fill="#fff" stroke="#111"/>
<text x="14" y="595" style="font-size:11px" textLength="63">MESM21,M1</text>
<text x="100" y="595" style="font-size:11.800px;fill:#808080" textLength="52">EPM21,M1</text>
<path d="M1331 587v7l-3-3.500zM1351 587v7l3-3.500z" fill="#a0a0a0"/>
<path d="M0 600h1366" stroke="#e0e0e0"/>
<!-- table -->
<rect x="0" y="603" width="1366" height="100" fill="#f0f0f0"/>
<text x="3" y="613" style="font-size:10px;font-weight:bold">x</text>
<rect x="16" y="604" width="1330" height="77" fill="#fff" stroke="#aaa"/>
<rect x="17" y="605" width="1328" height="21" fill="url(#hd)"/>
<path d="M17 626.500h1328" stroke="#d0d0d0"/>
<path d="M174.500 605v42M284.500 605v42M424.500 605v42M1040.500 605v42M1162.500 605v42M174.500 668v13M284.500 668v13M424.500 668v13M1040.500 668v13M1162.500 668v13" stroke="#d8d8d8"/>
<g class="tbl">
<text x="22" y="620" class="h">Символ</text><path d="M76 621h9l-4.500-5z" fill="#333"/>
<text x="181" y="620" class="h">Тикет</text><text x="419" y="620" class="rt h">Время</text><text x="523" y="620" class="h">Тип</text>
<text x="1013" y="620" class="h">T / P</text><text x="1157" y="620" class="rt h">Цена</text><text x="1339" y="620" class="rt h">Прибыль</text>
<path d="M19 630h8l3 3v12H19z" fill="#fff" stroke="#ee5522" stroke-width="1.400"/><path d="M21 635h6M21 638h6M21 641h4" stroke="#ee5522"/>
<text x="37" y="642">mesm21</text><text x="178" y="642">16887590</text><text x="421" y="642" class="rt">2021.06.10 04:00:00</text><text x="527" y="642">sell</text>
<text x="1158" y="642" class="rt">4224.75</text><text x="1322" y="642" class="rt">0.00</text>
<path d="M1332 634l7 7M1339 634l-7 7" stroke="#888" stroke-width="2"/>
<rect x="17" y="647" width="1328" height="21" fill="#c0c0c0"/>
<circle cx="27" cy="658" r="3" fill="#888"/>
<text x="37" y="662" style="font-weight:bold;font-size:10.800px" textLength="532">Баланс: 132.99 USD  Средства: 132.99  Маржа: 40.00  Свободная маржа: 92.99  Уровень маржи: 332.48%</text>
<text x="1322" y="662" class="rt" style="font-weight:bold">0.00</text>
<circle cx="1335" cy="657" r="8" fill="#dfe6df"/><path d="M1330 657h10M1335 652v10" stroke="#4aa820" stroke-width="2.200"/>
<path d="M19 670h8l3 3v9H19z" fill="#fff" stroke="#2a80d8" stroke-width="1.400"/><path d="M21 675h6M21 678h6" stroke="#2a80d8"/>
<text x="37" y="683">mesm21</text><text x="178" y="683">16887603</text><text x="421" y="683" class="rt">2021.06.10 04:00:00</text><text x="500" y="683">buy limit</text>
<text x="1158" y="683" class="rt">4224.75</text><text x="1322" y="683" class="rt">placed</text><path d="M1332 676l7 6M1339 676l-7 6" stroke="#888" stroke-width="2"/>
</g>
<!-- scrollbar -->
<rect x="1346" y="604" width="16" height="77" fill="#f0f0f0"/>
<rect x="1347" y="605" width="14" height="16" rx="2" fill="#f8f8f8" stroke="#bbb"/><path d="M1350 615l4-4 4 4z" fill="#333"/>
<rect x="1347" y="622" width="14" height="26" rx="2" fill="#f4f4f4" stroke="#bbb"/><path d="M1350 633h8M1350 635h8M1350 637h8" stroke="#888"/>
<rect x="1347" y="664" width="14" height="16" rx="2" fill="#f8f8f8" stroke="#bbb"/><path d="M1350 671l4 4 4-4z" fill="#333"/>
<rect x="0" y="681" width="1366" height="22" fill="#f0f0f0"/>
<rect x="1" y="617" width="13" height="85" fill="#c4d0dc"/>
<text transform="translate(11,700) rotate(-90)" style="font-size:12px;fill:#7c8a98" textLength="83">Инструменты</text>
<path d="M18 681.500h1345" stroke="#111"/>
<rect x="18.500" y="681.500" width="68" height="17" fill="#fff" stroke="#111"/>
<g style="fill:#808080">
<text x="28" y="695" style="font-size:11.700px">Торговля</text>
<text x="97" y="695" class="gt" style="font-size:11.700px">Активы</text><text x="156" y="695" class="gt" style="font-size:11.700px">История</text><text x="221" y="695" class="gt" style="font-size:11.700px">Новости</text><text x="286" y="695" class="gt" style="font-size:11.700px">Почта</text><text x="320" y="698" style="font-size:9px;fill:#e02020;font-weight:bold">7</text><text x="346" y="695" class="gt" style="font-size:11.700px">Календарь</text><text x="422" y="695" class="gt" style="font-size:11.700px">Компания</text><text x="496" y="695" class="gt" style="font-size:11.700px">Алерты</text>
</g>
<path d="M146.500 685v12M211.500 685v12M276.500 685v12M336.500 685v12M412.500 685v12M486.500 685v12" stroke="#808080"/>
<!-- bottom right tabs -->
<rect x="1046" y="688" width="12" height="12" fill="#f4c020" stroke="#c09010"/><path d="M1049 688v-2a3 3 0 0 1 6 0v2" fill="none" stroke="#888"/><path d="M1048 698l2-3 2 2 2-2 2 3z" fill="#1a50c0"/>
<text x="1062" y="699" style="font-size:11.800px" textLength="40">Маркет</text>
<rect x="1120" y="694" width="3" height="6" fill="#10b010"/><rect x="1124" y="691" width="3" height="8" fill="#10b010"/><path d="M1119 692a7 7 0 0 1 11 0M1119 688a11 11 0 0 1 12 0" stroke="#3a9ae0" fill="none" stroke-width="1.200"/>
<text x="1134" y="699" style="font-size:11.800px" textLength="46">Сигналы</text>
<ellipse cx="1202" cy="691" rx="8" ry="4" fill="#fff" stroke="#3a9ae0"/><rect x="1196" y="692" width="12" height="4" fill="#2f4248"/><rect x="1196" y="696" width="12" height="3" fill="#2f4248"/>
<text x="1212" y="699" style="font-size:11.800px">VPS</text>
<rect x="1245.500" y="687.500" width="15" height="12" fill="#103050" stroke="#1a6ab0"/><path d="M1247 696l4-2 3 1 5-4" stroke="#50d050" fill="none"/>
<text x="1263" y="699" style="font-size:11.800px" textLength="90">Тестер стратегий</text>
<!-- status bar -->
<rect y="703" width="1366" height="25" fill="#f0f0f0"/>
<path d="M0 704.500h1366" stroke="#b0b0b0"/>
<text x="2" y="722" style="font-size:11.700px" textLength="173">Для вызова справки нажмите F1</text>
<path d="M1045.500 709v18M1112.500 709v18M1181.500 709v18M1247.500 709v18" stroke="#aaa"/>
<rect x="1253" y="711" width="11" height="16" fill="#3a9ae0" stroke="#1a60a0"/><circle cx="1264" cy="722" r="4.500" fill="#4a9a2a"/><path d="M1261.500 722l2 2 3-3" stroke="#fff" fill="none"/>
<text x="1273" y="722" style="font-size:11.700px" textLength="55">2486 / 4 Kb</text>

<!-- taskbar -->
<rect y="728" width="1366" height="40" fill="url(#tbg)"/>
<path d="M0 728h1366" stroke="#1e3a60"/>
<circle cx="27" cy="748" r="18" fill="#1b5498" stroke="#8ab4d8"/><circle cx="27" cy="748" r="13" fill="#2a78c0"/>
<path d="M18 743q5-2 8 0v5q-4-2-8 0z" fill="#e84820"/><path d="M28 743q4 2 8 0v5q-4 2-8 0z" fill="#60b030"/><path d="M18 750q4-2 8 0v5q-4-2-8 0z" fill="#3a9ae0"/><path d="M28 750q4 2 8 0v5q-4 2-8 0z" fill="#f0c020"/>
<rect x="75" y="736" width="22" height="25" rx="2" fill="#6aa8e0" stroke="#c0d8f0"/><circle cx="85" cy="748" r="9.500" fill="#f08a10" stroke="#fff" stroke-width="1.500"/><path d="M82 743l8 5-8 5z" fill="#fff"/>
<rect x="136" y="740" width="26" height="20" fill="#f0f0f0"/><rect x="135" y="739" width="28" height="24" fill="#fff" stroke="#6c9c6c"/><rect x="137" y="741" width="17" height="18" fill="#2a8a3a"/><text x="139" y="756" style="font-size:18px;font-weight:bold;fill:#fff">X</text><path d="M155 748h8M155 752h8M155 756h8" stroke="#70a878"/>
<rect x="198" y="738" width="28" height="25" fill="#fff" stroke="#5a80c0"/><text x="199" y="757" style="font-size:20px;font-weight:bold;fill:#1a4aa8;font-family:'Liberation Serif',serif">W</text>
<rect x="262" y="738" width="26" height="26" rx="2" fill="#b8b8b0" stroke="#555" transform="rotate(-8 275 751)"/><rect x="265" y="741" width="17" height="6" fill="#888" transform="rotate(-8 275 751)"/><path d="M266 751h17M267 755h17M268 759h17" stroke="#333" stroke-width="2" stroke-dasharray="3 1.500"/>
<path d="M322 744h10l2-3h17v21h-29z" fill="#f0d680" stroke="#a08840"/><rect x="324" y="738" width="25" height="6" fill="#f4f4f4"/><path d="M325 739h4M335 739h4M342 739h4" stroke="#5aa040" stroke-width="2"/><rect x="330" y="752" width="14" height="9" fill="#7ab4e0"/>
<ellipse cx="400" cy="748" rx="13.500" ry="15" fill="#e01028"/><ellipse cx="400" cy="748" rx="6.500" ry="11" fill="#1b4878"/>
<rect x="432" y="729" width="58" height="37" rx="2" fill="#8fa4bc" fill-opacity=".7" stroke="#c0d0e0"/>
<circle cx="461" cy="750" r="10" fill="#f0c030"/><circle cx="453" cy="754" r="6" fill="#3a8ad8"/><circle cx="469" cy="754" r="6" fill="#2a70c0"/><circle cx="461" cy="741" r="5" fill="#3aa040"/><circle cx="461" cy="750" r="6.500" fill="#f4e8c0"/><text x="457.500" y="754" style="font-size:11px;font-weight:bold;fill:#c07010">5</text>
<text x="1029" y="750" style="font-size:12px;fill:#fff">EN</text>
<path d="M1061 738a8 8 0 0 1 12 0M1063 741a5 5 0 0 1 8 0" stroke="#fff" fill="none"/><rect x="1062" y="745" width="10" height="9" fill="#fff"/>
<path d="M1092 741l6 3v7q0 3-6 6-6-3-6-6v-7z" fill="#1a9a7a"/><path d="M1089 749l2 2 4-4" stroke="#fff" fill="none" stroke-width="1.200"/>
<circle cx="1116" cy="748" r="8.500" fill="#1b9ae8"/><path d="M1118 741l-4 7h3l-2 6 5-8h-3z" fill="#14355f"/>
<rect x="1133" y="739" width="5" height="6" fill="#888"/><rect x="1132" y="745" width="7" height="9" fill="#666"/><circle cx="1143" cy="752" r="4.500" fill="#2a8a2a"/><path d="M1141 752l1.500 1.500 2.500-2.500" stroke="#fff" fill="none"/>
<circle cx="1163" cy="748" r="8.500" fill="#2a9a2a"/><path d="M1159 752v-3M1163 752v-5M1167 752v-7" stroke="#fff" stroke-width="1.800"/>
<path d="M1181 742v14" stroke="#fff" stroke-width="1.500"/><path d="M1182 742h8v6h-8z" fill="#fff"/><circle cx="1191" cy="752" r="4.500" fill="#d82020"/><path d="M1189 750l4 4M1193 750l-4 4" stroke="#fff"/>
<path d="M1205.500 755v-2M1209.500 755v-4M1213.500 755v-7M1217.500 755v-10" stroke="#fff" stroke-width="2.500"/>
<path d="M1231 746h3l4-4v12l-4-4h-3z" fill="#fff"/><path d="M1241 745q2 3 0 6" stroke="#fff" fill="none"/>
<rect x="1253" y="741" width="9" height="14" fill="#fff"/><path d="M1262 748h5M1264 745v6" stroke="#fff" stroke-width="2"/>
<text x="1303" y="745" style="font-size:12px;fill:#fff">8:59</text>
<text x="1285" y="762" style="font-size:11.800px;fill:#fff" textLength="55">10.06.2021</text>
<rect x="1353" y="729" width="13" height="39" fill="#3f648f" stroke="#6a88a8"/>

<!-- dialog shadow & glass -->
<rect x="537" y="476" width="471" height="296" fill="#b8d0e8" opacity=".35" filter="url(#bl)"/>
<rect x="541" y="479" width="463" height="289" fill="url(#gl)" stroke="#0d1620"/>
<rect x="541" y="505" width="6" height="263" fill="#5a7890"/><rect x="997" y="505" width="7" height="263" fill="#4a6a80"/>
<rect x="950" y="478" width="48" height="17" rx="3" fill="url(#wb)" stroke="#d8e2ec"/><text x="971" y="492" style="font-size:12px;font-weight:bold;fill:#fff">X</text>
<text x="547" y="497" style="font-size:12px;fill:#1a1a1a">MESM21, Тик  1000</text>
<rect x="547" y="508" width="450" height="260" fill="#f0f0f0"/>

<g class="d">
<g stroke="#a04020" stroke-width="1">
<rect x="552.500" y="513.500" width="83" height="34" fill="#ff7f50"/><rect x="647.500" y="513.500" width="49" height="19" fill="#ff7f50"/><rect x="709.500" y="513.500" width="64" height="19" fill="#ff7f50"/>
</g>
<g stroke="#1a4a80"><rect x="552.500" y="563.500" width="83" height="34" fill="#1e90ff"/><rect x="647.500" y="577.500" width="49" height="19" fill="#1e90ff"/><rect x="709.500" y="577.500" width="64" height="19" fill="#1e90ff"/></g>
<rect x="647.500" y="543.500" width="49" height="23" fill="#f00" stroke="#901010"/>
<g stroke="#666"><rect x="709.500" y="543.500" width="64" height="23" fill="#d3d3d3"/><rect x="709.500" y="607.500" width="64" height="19" fill="#d3d3d3"/></g>
<text x="594" y="528" class="c">Best Sell Limit</text><text x="594" y="541" class="c">4224.75</text>
<text x="593" y="578" class="c">Best Buy Limit</text><text x="593" y="591" class="c">4224.50</text>
<text x="672" y="527" class="c" style="font-size:12px">SELL</text><text x="742" y="527" class="c" style="font-size:12px">Delete</text>
<text x="672" y="558" class="c" style="font-weight:bold;font-size:11.500px">CLOSE</text><text x="742" y="558" class="c" style="font-size:12px">Delete all</text>
<text x="672" y="591" class="c" style="font-size:12px">BUY</text><text x="742" y="591" class="c" style="font-size:12px">Delete</text>
<text x="742" y="622" class="c">Reverse</text>
<text x="553" y="620">объем ордера</text>
<!-- order volume spin -->
<rect class="sp" x="640.500" y="607.500" width="56" height="19"/><text x="643" y="621" style="font-size:12px">1</text><rect class="ar" x="681" y="609" width="13" height="7"/><rect class="ar" x="681" y="617" width="13" height="7"/><path d="M685 614l2.500-3 2.500 3zM685 619l2.500 3 2.500-3z" fill="#4a6a9a"/>
<!-- SL TP -->
<rect class="ck" x="552.500" y="640.500" width="12" height="12"/><path class="tk" d="M555 646l2.500 4 4-7"/><text x="569" y="648">SL</text>
<rect class="sp" x="594.500" y="637.500" width="64" height="19"/><text x="596" y="651" style="font-size:12px">7</text><rect class="ar" x="643" y="639" width="13" height="7"/><rect class="ar" x="643" y="647" width="13" height="7"/><path d="M647 644l2.500-3 2.500 3zM647 649l2.500 3 2.500-3z" fill="#4a6a9a"/>
<rect class="ck" x="665.500" y="640.500" width="12" height="12"/><path class="tk" d="M668 646l2.500 4 4-7"/><text x="682" y="648">TP</text>
<rect class="sp" x="709.500" y="637.500" width="64" height="19"/><text x="711" y="651" style="font-size:12px">5</text><rect class="ar" x="758" y="639" width="13" height="7"/><rect class="ar" x="758" y="647" width="13" height="7"/><path d="M762 644l2.500-3 2.500 3zM762 649l2.500 3 2.500-3z" fill="#4a6a9a"/>
<!-- limit group -->
<rect class="gr" x="781.500" y="520.500" width="210" height="114" rx="3"/><rect x="787" y="515" width="90" height="10" fill="#f0f0f0"/>
<text x="789" y="524">Лимитный ордер</text>
<rect class="ck" x="787.500" y="530.500" width="12" height="12"/><path class="tk" d="M790 536l2.500 4 4-7"/><text x="803" y="540">отменяется, если цена ушла на</text>
<rect class="sp" x="786.500" y="547.500" width="56" height="18"/><text x="788" y="560" style="font-size:12px">5</text><rect class="ar" x="827" y="549" width="13" height="7"/><rect class="ar" x="827" y="557" width="13" height="7"/><path d="M831 554l2.500-3 2.500 3zM831 559l2.500 3 2.500-3z" fill="#4a6a9a"/><text x="851" y="560">тиков</text>
<rect class="ck" x="787.500" y="575.500" width="12" height="12"/><text x="803" y="584">передвигается на</text>
<rect class="sp" x="903.500" y="569.500" width="41" height="19"/><text x="905" y="582" style="font-size:12px">0</text><rect class="ar" x="929" y="571" width="13" height="7"/><rect class="ar" x="929" y="579" width="13" height="7"/><path d="M933 576l2.500-3 2.500 3zM933 581l2.500 3 2.500-3z" fill="#4a6a9a"/><text x="952" y="584">тиков</text>
<text x="787" y="605">если цена прошла</text>
<rect class="sp" x="889.500" y="591.500" width="46" height="18"/><text x="891" y="604" style="font-size:12px">0</text><rect class="ar" x="920" y="593" width="13" height="7"/><rect class="ar" x="920" y="601" width="13" height="7"/><path d="M924 598l2.500-3 2.500 3zM924 603l2.500 3 2.500-3z" fill="#4a6a9a"/><text x="942" y="606">тиков и</text>
<text x="787" y="626">прошло не более</text>
<rect class="sp" x="889.500" y="614.500" width="57" height="18"/><text x="891" y="627" style="font-size:12px">0</text><rect class="ar" x="931" y="616" width="13" height="7"/><rect class="ar" x="931" y="624" width="13" height="7"/><path d="M935 621l2.500-3 2.500 3zM935 626l2.500 3 2.500-3z" fill="#4a6a9a"/><text x="955" y="626">сек.</text>
<rect class="ck" x="790.500" y="643.500" width="12" height="12"/><path class="tk" d="M793 649l2.500 4 4-7"/><text x="806" y="652">тейкпрофит лимитным ордером</text>
<!-- delta group -->
<rect class="gr" x="553.500" y="669.500" width="220" height="110" rx="3"/><rect x="559" y="664" width="80" height="10" fill="#f0f0f0"/>
<text x="561" y="673">Дельта/Объем</text>
<circle cx="565" cy="690" r="5.500" fill="#eee" stroke="#999"/><text x="576" y="694">покупка</text>
<rect class="ck" x="633.500" y="684.500" width="12" height="12"/><text x="649" y="694" style="font-size:14px;font-weight:bold;fill:#006400;letter-spacing:.2px">ВКЛЮЧИТЬ</text>
<circle cx="565" cy="713" r="5.500" fill="#eee" stroke="#999"/><circle cx="565" cy="713" r="3" fill="#14506e"/><text x="576" y="717">продажа</text>
<rect class="sp" x="632.500" y="704.500" width="56" height="19"/><text x="634" y="717" style="font-size:12px">10</text><rect class="ar" x="673" y="706" width="13" height="7"/><rect class="ar" x="673" y="714" width="13" height="7"/><path d="M677 711l2.500-3 2.500 3zM677 716l2.500 3 2.500-3z" fill="#4a6a9a"/><text x="691" y="717">таймер, сек</text>
<rect class="ck" x="559.500" y="731.500" width="12" height="12"/><path class="tk" d="M562 737l2.500 4 4-7"/><text x="576" y="741">использовать линию</text>
<rect class="ck" x="700.500" y="731.500" width="12" height="12"/><path class="tk" d="M703 737l2.500 4 4-7"/><text x="717" y="741">лимит</text>
<rect class="sp" x="559.500" y="751.500" width="41" height="20"/><text x="561" y="764" style="font-size:12px">1</text><rect class="ar" x="585" y="753" width="13" height="7"/><rect class="ar" x="585" y="761" width="13" height="7"/><path d="M589 758l2.500-3 2.500 3zM589 763l2.500 3 2.500-3z" fill="#4a6a9a"/><text x="607" y="763">допуск по сигналу в тиках</text>
<!-- imbalance group -->
<rect class="gr" x="781.500" y="669.500" width="210" height="110" rx="3"/><rect x="787" y="664" width="58" height="10" fill="#f0f0f0"/>
<text x="789" y="673">Имбаланс</text>
<circle cx="793" cy="687" r="5.500" fill="#eee" stroke="#999"/><text x="805" y="691">покупка</text>
<rect class="ck" x="863.500" y="683.500" width="12" height="12"/><text x="879" y="693" style="font-size:14px;font-weight:bold;fill:#006400;letter-spacing:.2px">ВКЛЮЧИТЬ</text>
<circle cx="793" cy="712" r="5.500" fill="#eee" stroke="#999"/><circle cx="793" cy="712" r="3" fill="#14506e"/><text x="805" y="716">продажа</text>
<rect class="sp" x="861.500" y="704.500" width="56" height="18"/><text x="863" y="716" style="font-size:12px">10</text><rect class="ar" x="902" y="706" width="13" height="7"/><rect class="ar" x="902" y="714" width="13" height="7"/><path d="M906 711l2.500-3 2.500 3zM906 716l2.500 3 2.500-3z" fill="#4a6a9a"/><text x="922" y="717">таймер, сек</text>
<rect class="ck" x="789.500" y="731.500" width="12" height="12"/><path class="tk" d="M792 737l2.500 4 4-7"/><text x="805" y="741">использовать линию</text>
<rect class="ck" x="932.500" y="731.500" width="12" height="12"/><path class="tk" d="M935 737l2.500 4 4-7"/><text x="948" y="741">лимит</text>
<rect class="sp" x="789.500" y="751.500" width="41" height="20"/><text x="791" y="764" style="font-size:12px">1</text><rect class="ar" x="815" y="753" width="13" height="7"/><rect class="ar" x="815" y="761" width="13" height="7"/><path d="M819 758l2.500-3 2.500 3zM819 763l2.500 3 2.500-3z" fill="#4a6a9a"/><text x="838" y="763">допуск по сигналу в тиках</text>
</g>
</svg>
</body></html>
